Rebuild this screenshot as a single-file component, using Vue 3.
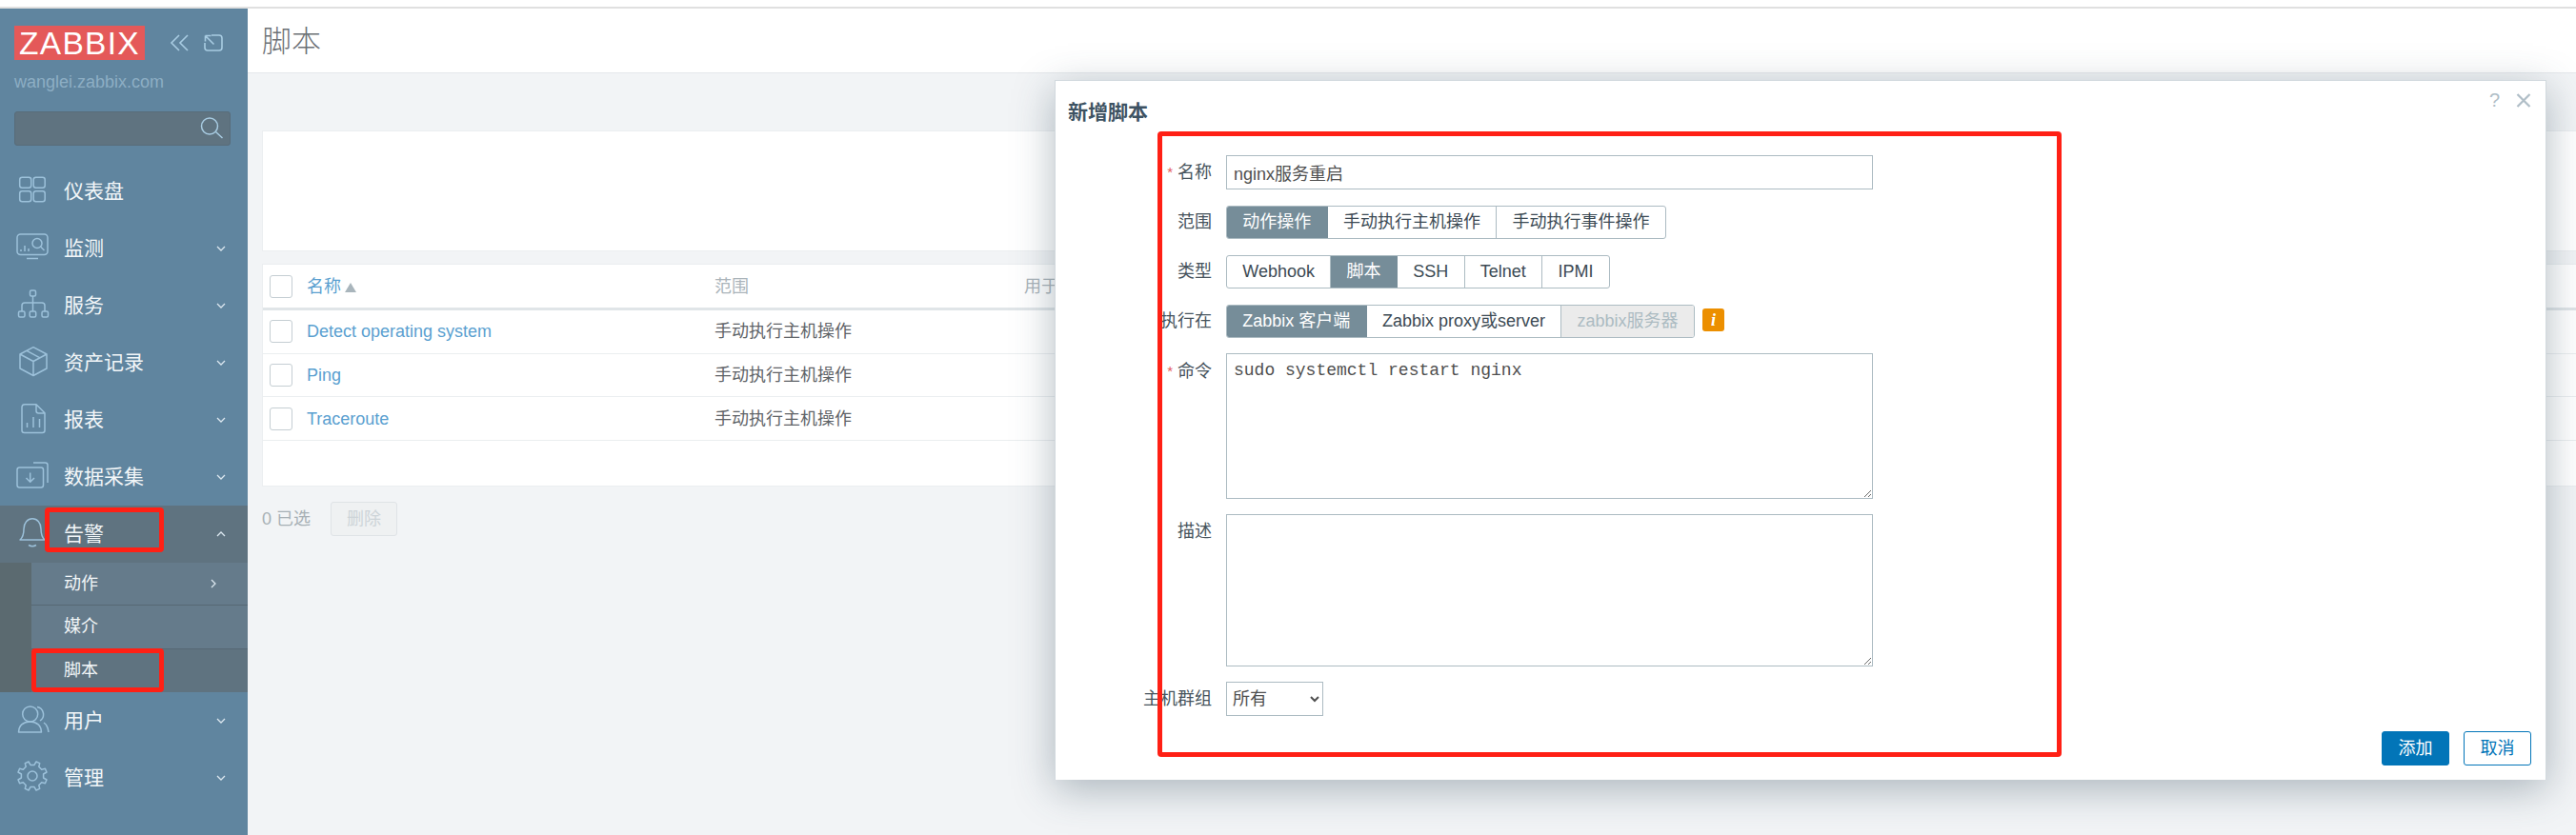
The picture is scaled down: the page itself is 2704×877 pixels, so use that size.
<script setup>
import { ref } from "vue";

let name = ref("nginx服务重启");
let command = ref("sudo systemctl restart nginx");
let description = ref("");

let rows = [
  { name: "Detect operating system", scope: "手动执行主机操作" },
  { name: "Ping", scope: "手动执行主机操作" },
  { name: "Traceroute", scope: "手动执行主机操作" },
];

let scopes = [{ t: "动作操作", on: true }, { t: "手动执行主机操作" }, { t: "手动执行事件操作" }];
let types = [{ t: "Webhook" }, { t: "脚本", on: true }, { t: "SSH" }, { t: "Telnet" }, { t: "IPMI" }];
let targets = [{ t: "Zabbix 客户端", on: true }, { t: "Zabbix proxy或server" }, { t: "zabbix服务器", off: true }];

// gear outline for the admin icon
function gearPath() {
  let pts = [];
  for (let i = 0; i < 8; i++) {
    let a = (i * Math.PI) / 4 - Math.PI / 8;
    for (let [d, r] of [[-0.22, 11.8], [-0.13, 15.5], [0.13, 15.5], [0.22, 11.8]]) {
      let x = 17 + r * Math.cos(a + d);
      let y = 15 + r * Math.sin(a + d);
      pts.push(x.toFixed(1) + " " + y.toFixed(1));
    }
  }
  return "M" + pts.join("L") + "Z";
}
let gear = gearPath();
</script>

<template>
  <div class="page">
    <div class="topline"></div>
    <div class="main">
      <aside class="side">
        <div class="brand">
          <div class="logo">ZABBIX</div>
          <svg class="tool" width="20" height="18" viewBox="0 0 20 18">
            <path d="M10 1 2 9l8 8M19 1l-8 8 8 8" />
          </svg>
          <svg class="tool kiosk" width="20" height="18" viewBox="0 0 20 18">
            <path d="M8 1h8a3 3 0 0 1 3 3v10a3 3 0 0 1-3 3H4a3 3 0 0 1-3-3v-5M1.500 1.500l9 9M1.500 1.500v6M1.500 1.500h6" />
          </svg>
        </div>
        <div class="host">wanglei.zabbix.com</div>
        <div class="search">
          <svg width="26" height="26" viewBox="0 0 26 26">
            <circle cx="11" cy="10.500" r="8.500" />
            <path d="m17.500 16.500 7 6.500" />
          </svg>
        </div>

        <nav class="menu">
          <div class="item">
            <svg class="ico" width="34" height="34" viewBox="0 0 34 34">
              <rect x="3.700" y="2.200" width="12" height="11" rx="2.500" />
              <rect x="18.200" y="2.200" width="12" height="11" rx="2.500" />
              <rect x="3.700" y="16.800" width="12" height="11" rx="2.500" />
              <rect x="18.200" y="16.800" width="12" height="11" rx="2.500" />
            </svg>
            <span>仪表盘</span>
          </div>
          <div class="item">
            <svg class="ico" width="34" height="34" viewBox="0 0 34 34">
              <rect x="1" y="2" width="32" height="21.500" rx="3.500" />
              <path d="M11 27.500h12M5 18v2M9 14v6M13 17v3" />
              <circle cx="22" cy="11.500" r="5" />
              <path d="m25.500 15 4 4" />
            </svg>
            <span>监测</span>
            <svg class="chev" width="10" height="6" viewBox="0 0 10 6"><path d="m1 1 4 4 4-4" /></svg>
          </div>
          <div class="item">
            <svg class="ico" width="34" height="34" viewBox="0 0 34 34">
              <rect x="14.500" y="1" width="6" height="6" rx="1.500" />
              <rect x="2.500" y="23" width="6.500" height="6" rx="1.500" />
              <rect x="14.200" y="23" width="6.500" height="6" rx="1.500" />
              <rect x="27" y="23" width="6.500" height="6" rx="1.500" />
              <path d="M17.500 7v16M6 23v-6a3 3 0 0 1 3-3h18a3 3 0 0 1 3 3v6" />
            </svg>
            <span>服务</span>
            <svg class="chev" width="10" height="6" viewBox="0 0 10 6"><path d="m1 1 4 4 4-4" /></svg>
          </div>
          <div class="item">
            <svg class="ico" width="34" height="34" viewBox="0 0 34 34">
              <path d="m18 .7 14 7.300v15l-14 7.500-14-7.500V8zM4 8l14 7.500L32 8M18 15.500v15M11 4.300l14 7.500" />
            </svg>
            <span>资产记录</span>
            <svg class="chev" width="10" height="6" viewBox="0 0 10 6"><path d="m1 1 4 4 4-4" /></svg>
          </div>
          <div class="item">
            <svg class="ico" width="34" height="34" viewBox="0 0 34 34">
              <path d="M9 .8h12l9 9V28a2.500 2.500 0 0 1-2.500 2.500H8.500A2.500 2.500 0 0 1 6 28V3.500A3 3 0 0 1 9 .8zM21 1v6.500a2.500 2.500 0 0 0 2.500 2.500H30M11.500 25v-5M18 25V14M24.500 25v-9" />
            </svg>
            <span>报表</span>
            <svg class="chev" width="10" height="6" viewBox="0 0 10 6"><path d="m1 1 4 4 4-4" /></svg>
          </div>
          <div class="item">
            <svg class="ico" width="34" height="34" viewBox="0 0 34 34">
              <rect x="1" y="7" width="27.500" height="21" rx="2.500" />
              <path d="M18 2h12.500a2.500 2.500 0 0 1 2.500 2.500V23M14.700 12.500V22M10.500 18l4.200 4.200L19 18" />
            </svg>
            <span>数据采集</span>
            <svg class="chev" width="10" height="6" viewBox="0 0 10 6"><path d="m1 1 4 4 4-4" /></svg>
          </div>
          <div class="item open">
            <svg class="ico" width="34" height="34" viewBox="0 0 34 34">
              <path d="M4 23c3-2.500 4-5 4-11.500C8 5 12 .8 17 .8s9 4.200 9 10.700c0 6.500 1 9 4 11.500zM13 28.500c2.500 1.500 5.500 1.500 8 0" />
            </svg>
            <span>告警</span>
            <svg class="chev" width="10" height="6" viewBox="0 0 10 6"><path d="m1 5 4-4 4 4" /></svg>
          </div>
          <div class="sub">
            <div class="subitem">
              <span>动作</span>
              <svg class="arrow" width="6" height="10" viewBox="0 0 6 10"><path d="m1 1 4 4-4 4" /></svg>
            </div>
            <div class="subitem">媒介</div>
            <div class="subitem current">脚本</div>
          </div>
          <div class="item">
            <svg class="ico" width="34" height="34" viewBox="0 0 34 34">
              <circle cx="14.700" cy="10" r="8" />
              <path d="M2.500 29c0-7 5-11 12-11s12 4 12 11zM22 2.500a8 8 0 0 1 3 14.500M29 19c3 2 4.500 5 5 10" />
            </svg>
            <span>用户</span>
            <svg class="chev" width="10" height="6" viewBox="0 0 10 6"><path d="m1 1 4 4 4-4" /></svg>
          </div>
          <div class="item">
            <svg class="ico" width="34" height="34" viewBox="0 0 34 34">
              <path :d="gear" />
              <circle cx="17" cy="15" r="5" />
            </svg>
            <span>管理</span>
            <svg class="chev" width="10" height="6" viewBox="0 0 10 6"><path d="m1 1 4 4 4-4" /></svg>
          </div>
        </nav>
      </aside>

      <main class="content">
        <header class="head"><h1>脚本</h1></header>
        <div class="filter"></div>
        <div class="list">
          <div class="row thead">
            <span class="check"></span>
            <span class="link">名称 <i class="sort"></i></span>
            <span class="muted">范围</span>
            <span class="muted">用于</span>
          </div>
          <div v-for="r in rows" :key="r.name" class="row">
            <span class="check"></span>
            <span class="link">{{ r.name }}</span>
            <span>{{ r.scope }}</span>
            <span></span>
          </div>
        </div>
        <div class="selected">
          <span>0 已选</span>
          <button class="ghost" disabled>删除</button>
        </div>
      </main>
    </div>

    <section class="modal">
      <div class="m-title">
        <h2>新增脚本</h2>
        <div class="m-tools">
          <span class="help">?</span>
          <svg width="16" height="15" viewBox="0 0 16 15"><path d="m1.500 1 13 13M14.500 1l-13 13" /></svg>
        </div>
      </div>
      <div class="form">
        <div class="f-row">
          <label><b>*</b>名称</label>
          <input v-model="name" class="wide tall" type="text" />
        </div>
        <div class="f-row seg-row">
          <label>范围</label>
          <div class="seg">
            <span v-for="s in scopes" :key="s.t" :class="{ on: s.on, off: s.off }">{{ s.t }}</span>
          </div>
        </div>
        <div class="f-row seg-row">
          <label>类型</label>
          <div class="seg">
            <span v-for="s in types" :key="s.t" :class="{ on: s.on, off: s.off }">{{ s.t }}</span>
          </div>
        </div>
        <div class="f-row seg-row">
          <label>执行在</label>
          <div class="seg">
            <span v-for="s in targets" :key="s.t" :class="{ on: s.on, off: s.off }">{{ s.t }}</span>
          </div>
          <span class="info">i</span>
        </div>
        <div class="f-row">
          <label class="low"><b>*</b>命令</label>
          <textarea v-model="command" class="wide cmd"></textarea>
        </div>
        <div class="f-row">
          <label class="low">描述</label>
          <textarea v-model="description" class="wide desc"></textarea>
        </div>
        <div class="f-row">
          <label class="low">主机群组</label>
          <select class="group"><option>所有</option></select>
        </div>
      </div>
      <div class="m-foot">
        <button class="primary">添加</button>
        <button class="outline">取消</button>
      </div>
    </section>

    <div class="mark mark-alert"></div>
    <div class="mark mark-script"></div>
    <div class="mark mark-form"></div>
  </div>
</template>

<style>
html,
body {
  margin: 0;
  overflow: hidden;
}
</style>

<style scoped>
.page {
  position: relative;
  width: 2704px;
  height: 877px;
  overflow: hidden;
  background: #fff;
  font: 18px/24px "Liberation Sans", "Noto Sans CJK SC", sans-serif;
  color: #5f6468;
}
.topline {
  height: 2px;
  margin-top: 7px;
  background: #e0e0e0;
}
.main {
  display: flex;
  height: 868px;
}

/* sidebar */
.side {
  width: 260px;
  flex: none;
  background: #60859f;
  color: #f2f6f8;
}
.brand {
  display: flex;
  align-items: flex-start;
  padding: 18px 0 0 15px;
}
.logo {
  width: 137px;
  height: 36px;
  background: #e45959;
  color: #fff;
  font-size: 33.5px;
  line-height: 37px;
  letter-spacing: 1.3px;
  text-align: center;
}
.tool {
  margin: 9px 0 0 26px;
  fill: none;
  stroke: #a8cce2;
  stroke-width: 1.6;
}
.tool.kiosk {
  margin-left: 16px;
}
.host {
  margin: 11px 0 0 15px;
  color: #8daec4;
  line-height: 24px;
}
.search {
  display: flex;
  justify-content: flex-end;
  align-items: center;
  box-sizing: border-box;
  width: 227px;
  height: 36px;
  margin: 19px 0 0 15px;
  padding-right: 6px;
  background: #5f7380;
  border: 1px solid #586c79;
  border-radius: 3px;
}
.search svg {
  fill: none;
  stroke: #a8cce2;
  stroke-width: 1.500;
}
.menu {
  margin-top: 18px;
}
.item {
  display: flex;
  align-items: center;
  height: 60px;
  padding-left: 17px;
  font-size: 21px;
}
.item > span {
  margin-left: 16px;
}
.ico {
  flex: none;
  overflow: visible;
  fill: none;
  stroke: #9cc1da;
  stroke-width: 1.500;
  stroke-linejoin: round;
}
.chev {
  margin-left: auto;
  margin-right: 23px;
  fill: none;
  stroke: #dbe7ef;
  stroke-width: 1.300;
}
.item.open {
  background: #5f7380;
}
.sub {
  padding-left: 33px;
  background: #5b6a70;
  font-size: 18px;
}
.subitem {
  display: flex;
  align-items: center;
  box-sizing: border-box;
  height: 45.330px;
  padding-left: 34px;
  background: #657b8b;
  border-bottom: 1px solid #566874;
}
.subitem.current {
  background: #5f7380;
  border-bottom: 0;
}
.arrow {
  margin-left: auto;
  margin-right: 33px;
  fill: none;
  stroke: #dbe7ef;
  stroke-width: 1.300;
}

/* page */
.content {
  flex: 1;
  min-width: 0;
  background: #f2f4f6;
}
.head {
  height: 67px;
  padding-left: 15px;
  background: #fff;
  border-bottom: 1px solid #e5e8eb;
}
.head h1 {
  margin: 0;
  font-size: 31px;
  font-weight: 300;
  line-height: 70px;
  color: #6c7176;
}
.filter {
  box-sizing: border-box;
  height: 127px;
  margin: 60px 0 13px 15px;
  background: #fff;
  border: 1px solid #ebeef0;
  border-right: 0;
}
.list {
  box-sizing: border-box;
  height: 234px;
  margin-left: 15px;
  background: #fff;
  border: 1px solid #ebeef0;
  border-right: 0;
}
.row {
  display: grid;
  grid-template-columns: 46px 428px 325px 1fr;
  align-items: center;
  height: 45.700px;
  box-sizing: border-box;
  border-bottom: 1px solid #ebeef0;
}
.row.thead {
  height: 48px;
  border-bottom: 3px solid #e0e5e8;
}
.check {
  box-sizing: border-box;
  width: 24px;
  height: 24px;
  margin-left: 7px;
  background: #fff;
  border: 1px solid #c5ced3;
  border-radius: 3px;
}
.link {
  color: #5a9fd0;
}
.muted {
  color: #aab4ba;
}
.sort {
  display: inline-block;
  margin-left: -1px;
  border: 6px solid transparent;
  border-top: 0;
  border-bottom: 10px solid #a9b5bc;
}
.selected {
  display: flex;
  align-items: center;
  gap: 21px;
  margin: 16px 0 0 15px;
  color: #a7b0b5;
}
.ghost {
  width: 70px;
  height: 36px;
  padding: 0;
  background: #eff1f2;
  border: 1px solid #dfe3e6;
  border-radius: 3px;
  color: #cdd4d8;
  font: inherit;
}

/* dialog */
.modal {
  position: absolute;
  left: 1107px;
  top: 84px;
  box-sizing: border-box;
  width: 1566px;
  height: 735px;
  padding: 0 15px 15px 0;
  background: #fff;
  border: 1px solid #d2d9de;
  border-bottom: 0;
  box-shadow: 0 10px 40px rgba(56, 80, 95, 0.38);
}
.m-title {
  display: flex;
  justify-content: space-between;
  height: 78px;
  padding-left: 13px;
}
.m-title h2 {
  margin: 0;
  font-size: 21px;
  line-height: 66px;
  color: #3d5262;
}
.m-tools {
  display: flex;
  gap: 17px;
  height: 15px;
  margin-top: 13px;
  color: #b0bec7;
  align-items: center;
}
.help {
  font-size: 20px;
  line-height: 15px;
}
.m-tools svg {
  fill: none;
  stroke: #b0bec7;
  stroke-width: 2.200;
}
.form {
  display: flex;
  flex-direction: column;
  gap: 16px;
}
.f-row {
  display: flex;
  align-items: flex-start;
}
.f-row label {
  flex: none;
  width: 164px;
  margin-right: 15px;
  line-height: 35px;
  text-align: right;
  color: #46535c;
}
.f-row label.low {
  padding-top: 1px;
}
.f-row label b {
  margin-right: 5px;
  font-size: 15px;
  font-weight: 400;
  color: #e45959;
  vertical-align: 1px;
}
.seg-row {
  margin-top: 1px;
}
.wide {
  box-sizing: border-box;
  width: 679px;
  padding: 0 7px;
  background: #fff;
  border: 1px solid #acbbc2;
  border-radius: 0;
  outline: 0;
  color: #4f4f4f;
  font: inherit;
}
.tall {
  height: 36px;
}
.cmd,
.desc {
  padding-top: 7px;
  font: 18px/20px "Liberation Mono", monospace;
}
.cmd {
  height: 153px;
}
.desc {
  height: 160px;
}
.group {
  box-sizing: border-box;
  width: 102px;
  height: 36px;
  padding: 0 0 0 2px;
  background: #fff;
  border: 1px solid #acbbc2;
  border-radius: 0;
  color: #4f4f4f;
  font: inherit;
}
.seg {
  display: flex;
  box-sizing: border-box;
  height: 35px;
  background: #fff;
  border: 1px solid #acbbc2;
  border-radius: 3px;
  overflow: hidden;
  color: #3c4a54;
  line-height: 33px;
}
.seg span {
  padding: 0 16.300px;
  border-right: 1px solid #acbbc2;
}
.seg span:last-child {
  border-right: 0;
}
.seg .on {
  background: #768d99;
  color: #fff;
  border-right-color: #768d99;
}
.seg .off {
  background: #ebebeb;
  color: #acbbc2;
}
.info {
  width: 23px;
  height: 24px;
  margin: 4px 0 0 8px;
  background: #ec8f00;
  border-radius: 3px;
  color: #fff;
  font: italic 700 18px/24px "Liberation Serif", serif;
  text-align: center;
}
.m-foot {
  display: flex;
  justify-content: flex-end;
  gap: 15px;
  margin-top: 16px;
}
.m-foot button {
  box-sizing: border-box;
  width: 71px;
  height: 36px;
  padding: 0;
  border: 1px solid #0275b8;
  border-radius: 3px;
  font: inherit;
}
.primary {
  background: #0275b8;
  color: #fff;
}
.outline {
  background: #fff;
  color: #0275b8;
}

/* red annotations drawn over the screenshot */
.mark {
  position: absolute;
  box-sizing: border-box;
  border: 5px solid #ff2015;
  border-radius: 4px;
  pointer-events: none;
}
.mark-alert {
  left: 47px;
  top: 533px;
  width: 125px;
  height: 47px;
}
.mark-script {
  left: 33px;
  top: 681px;
  width: 139px;
  height: 46px;
}
.mark-form {
  left: 1215px;
  top: 138px;
  width: 949px;
  height: 657px;
}
</style>
